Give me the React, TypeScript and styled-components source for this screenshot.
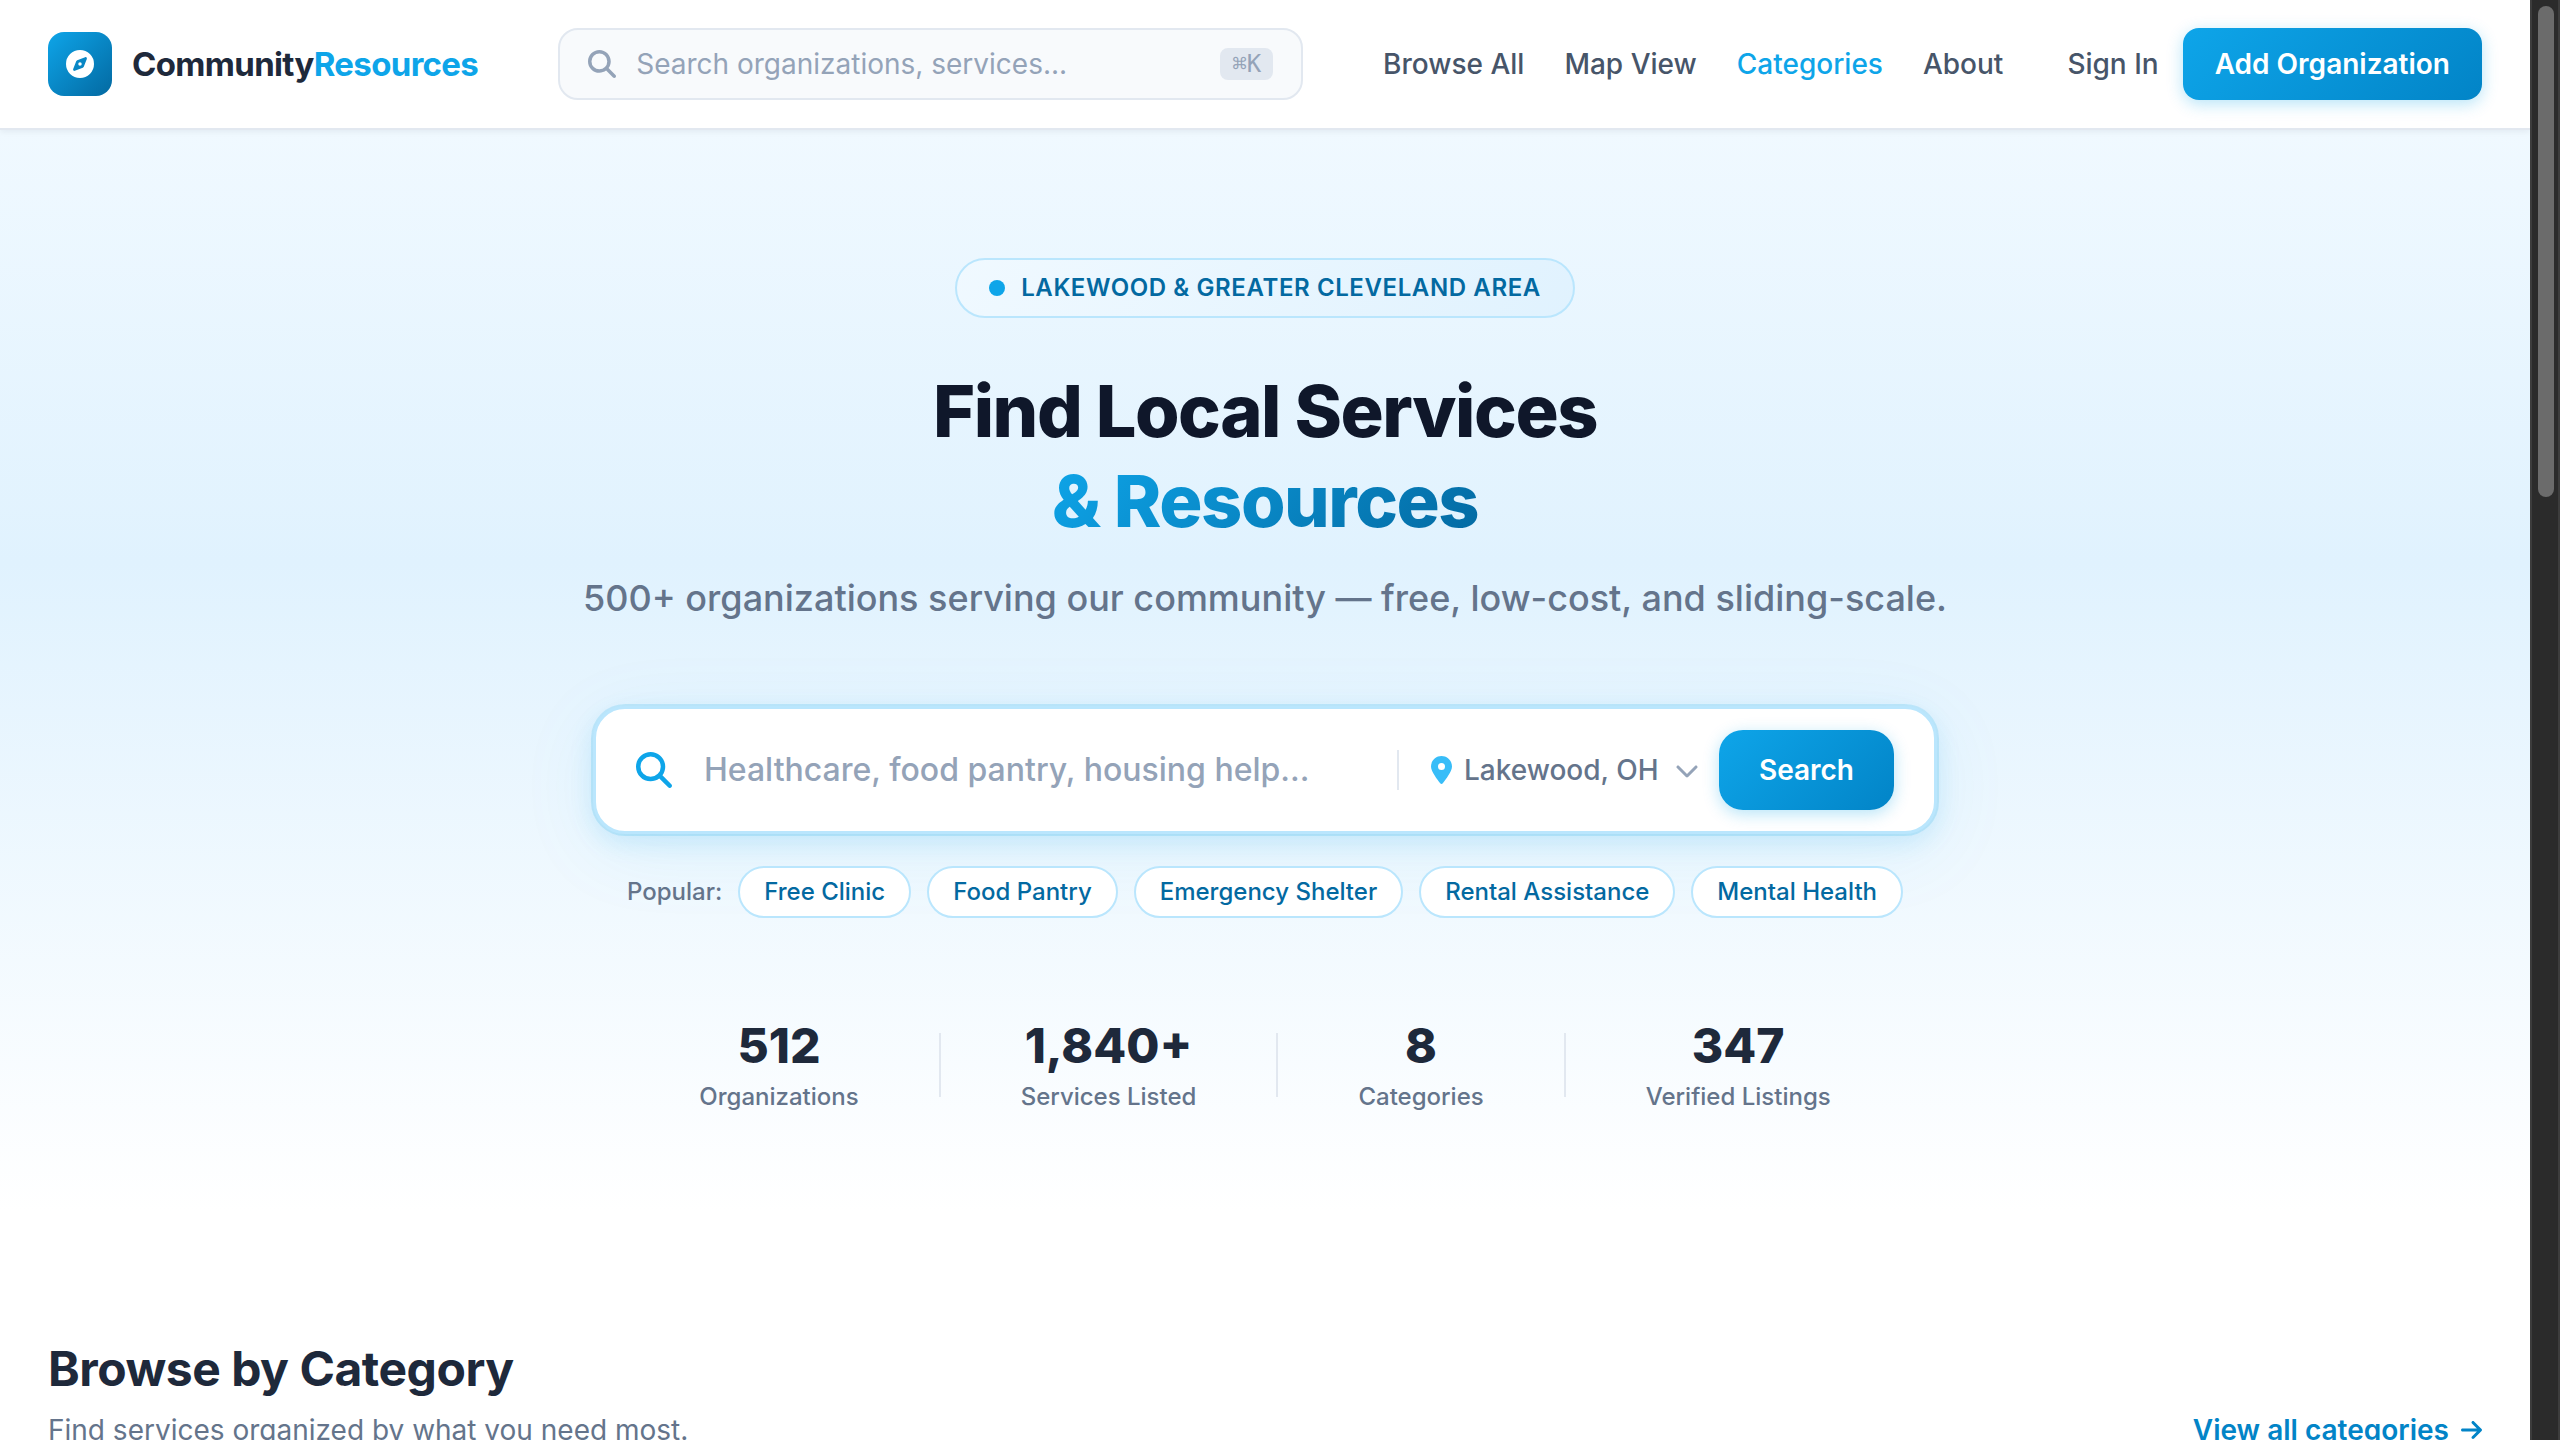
import React from "react";
import styled, { createGlobalStyle } from "styled-components";
import {
  FaArrowRight,
  FaChevronDown,
  FaCompass,
  FaLocationDot,
  FaMagnifyingGlass,
} from "react-icons/fa6";

const GlobalStyle = createGlobalStyle`
  *, *::before, *::after { box-sizing: border-box; }
  body { margin: 0; background: #fff; }
  body, button, input, select {
    font-family: Inter, "Liberation Sans", sans-serif;
    -webkit-font-smoothing: antialiased;
  }
  h1, h2, p, ul, dl, dd { margin: 0; padding: 0; }
  a { text-decoration: none; }
  svg { flex-shrink: 0; }
`;

const Shell = styled.div`
  display: grid;
  grid-template-columns: minmax(0, 1fr) 30px;
  height: 100vh;
  overflow: hidden;
`;

const Page = styled.div`
  min-width: 0;
  overflow: hidden;
`;

const ScrollTrack = styled.div`
  background: #2b2b2b;
  border: solid #3d3d3d;
  border-width: 0 2px;
  padding: 6px 4px 6px 6px;
`;

const ScrollThumb = styled.div`
  height: 34.4%;
  border-radius: 8px;
  background: #6b6b6b;
`;

const Header = styled.header`
  position: relative;
  display: flex;
  align-items: center;
  height: 130px;
  padding: 0 48px;
  background: #fff;
  border-bottom: 2px solid #e2e8f0;
  box-shadow: 0 2px 6px rgba(15, 23, 42, 0.06);
`;

const Brand = styled.a`
  display: flex;
  align-items: center;
  gap: 20px;
  color: #1e293b;
  font-size: 33px;
  font-weight: 700;
  letter-spacing: -0.02em;
  line-height: 48px;
`;

const BrandMark = styled.span`
  display: grid;
  place-items: center;
  width: 64px;
  height: 64px;
  border-radius: 16px;
  color: #fff;
  background: linear-gradient(135deg, #0ea5e9, #0369a1);
`;

const BrandAccent = styled.span`
  color: #0ea5e9;
`;

const QuickSearch = styled.label`
  display: flex;
  flex: 1;
  align-items: center;
  gap: 20px;
  min-width: 0;
  height: 72px;
  margin: 0 80px;
  padding: 0 28px;
  border: 2px solid #e2e8f0;
  border-radius: 20px;
  background: #f8fafc;
  color: #94a3b8;
`;

const TextInput = styled.input<{ $large?: boolean }>`
  flex: 1;
  min-width: 0;
  padding: 0;
  border: 0;
  outline: 0;
  background: transparent;
  color: #1e293b;
  font-size: ${(p) => (p.$large ? 32 : 28)}px;
  font-weight: ${(p) => (p.$large ? 500 : 400)};
  line-height: 48px;
  &::placeholder {
    color: #94a3b8;
    opacity: 1;
  }
`;

const Shortcut = styled.kbd`
  padding: 0 12px;
  border-radius: 8px;
  background: #e2e8f0;
  color: #94a3b8;
  font-family: "DejaVu Sans Mono", monospace;
  font-size: 24px;
  line-height: 32px;
`;

const Nav = styled.nav`
  display: flex;
  gap: 40px;
  margin-right: 64px;
`;

const NavLink = styled.a<{ $active?: boolean }>`
  color: ${(p) => (p.$active ? "#0ea5e9" : "#475569")};
  font-size: 28px;
  font-weight: 500;
  line-height: 42px;
  white-space: nowrap;
`;

const PrimaryButton = styled.button<{ $large?: boolean }>`
  height: ${(p) => (p.$large ? 80 : 72)}px;
  padding: 0 ${(p) => (p.$large ? 40 : 32)}px;
  border: 0;
  border-radius: ${(p) => (p.$large ? 24 : 16)}px;
  background: linear-gradient(135deg, #0ea5e9, #0284c7);
  box-shadow: 0 4px 16px rgba(14, 165, 233, 0.3);
  color: #fff;
  font-size: 28px;
  font-weight: 600;
  white-space: nowrap;
`;

const Actions = styled.div`
  display: flex;
  align-items: center;
  gap: 24px;
`;

const Hero = styled.section`
  display: flex;
  flex-direction: column;
  align-items: center;
  padding: 128px 48px 96px;
  background: linear-gradient(180deg, #f0f9ff 0%, #e0f2fe 40%, #fff 100%);
`;

const Badge = styled.p`
  display: flex;
  align-items: center;
  gap: 16px;
  margin-bottom: 48px;
  padding: 10px 32px;
  border: 2px solid #bae6fd;
  border-radius: 30px;
  background: linear-gradient(135deg, #f0f9ff, #e0f2fe);
  color: #0369a1;
  font-size: 24px;
  font-weight: 600;
  letter-spacing: 0.025em;
  line-height: 36px;
  text-transform: uppercase;
`;

const Dot = styled.span`
  width: 16px;
  height: 16px;
  border-radius: 50%;
  background: #0ea5e9;
`;

const Title = styled.h1`
  color: #0f172a;
  font-size: 72px;
  font-weight: 800;
  letter-spacing: -0.02em;
  line-height: 90px;
  text-align: center;
`;

const TitleAccent = styled.span`
  display: block;
  width: fit-content;
  margin: 0 auto;
  background: linear-gradient(135deg, #0ea5e9, #0369a1);
  background-clip: text;
  color: transparent;
`;

const Lead = styled.p`
  margin: 24px 0 80px;
  color: #64748b;
  font-size: 36px;
  font-weight: 500;
  line-height: 56px;
  text-align: center;
`;

const SearchBar = styled.form`
  display: flex;
  align-items: center;
  width: 100%;
  max-width: 1344px;
  height: 128px;
  padding: 0 40px;
  border: 3px solid #bae6fd;
  border-radius: 32px;
  background: #fff;
  box-shadow:
    0 0 0 2px rgba(14, 165, 233, 0.16),
    0 8px 24px rgba(14, 165, 233, 0.14),
    0 16px 80px rgba(14, 165, 233, 0.08);
`;

const SearchField = styled.label`
  display: flex;
  flex: 1;
  align-items: center;
  gap: 32px;
  min-width: 0;
  color: #0ea5e9;
`;

const LocationField = styled.label`
  display: grid;
  grid-template-columns: auto auto 24px;
  align-items: center;
  margin-right: 20px;
  color: #94a3b8;
`;

const Pin = styled(FaLocationDot)`
  width: 21px;
  height: 28px;
  margin-right: 12px;
  color: #38bdf8;
`;

const LocationSelect = styled.select`
  grid-column: 2 / 4;
  grid-row: 1;
  padding: 0 40px 0 0;
  border: 0;
  outline: 0;
  appearance: none;
  background: transparent;
  color: #64748b;
  font-size: 28px;
  font-weight: 500;
  line-height: 42px;
`;

const Caret = styled(FaChevronDown)`
  grid-column: 3;
  grid-row: 1;
  pointer-events: none;
`;

const Divider = styled.span<{ $tall?: boolean }>`
  width: 2px;
  height: ${(p) => (p.$tall ? 64 : 40)}px;
  background: #e2e8f0;
`;

const FieldDivider = styled(Divider)`
  margin: 0 32px;
`;

const Popular = styled.div`
  display: flex;
  align-items: center;
  gap: 16px;
  margin: 32px 0 96px;
  color: #64748b;
  font-size: 24px;
  font-weight: 500;
  line-height: 36px;
`;

const Chip = styled.button`
  padding: 6px 24px;
  border: 2px solid #bae6fd;
  border-radius: 26px;
  background: #fff;
  color: #0369a1;
  font-size: 24px;
  font-weight: 500;
  line-height: 36px;
`;

const Stats = styled.dl`
  display: flex;
  align-items: center;
  gap: 80px;
`;

const Stat = styled.div`
  display: flex;
  flex-direction: column-reverse;
  align-items: center;
`;

const StatValue = styled.dd`
  color: #1e293b;
  font-size: 48px;
  font-weight: 800;
  line-height: 64px;
`;

const StatLabel = styled.dt`
  color: #64748b;
  font-size: 24px;
  font-weight: 500;
  line-height: 38px;
`;

const Categories = styled.section`
  display: flex;
  align-items: flex-end;
  justify-content: space-between;
  padding: 121px 48px;
`;

const SectionTitle = styled.h2`
  color: #1e293b;
  font-size: 48px;
  font-weight: 700;
  letter-spacing: -0.01em;
  line-height: 72px;
`;

const SectionText = styled.p`
  margin-top: 4px;
  color: #64748b;
  font-size: 28px;
  line-height: 42px;
`;

const MoreLink = styled.a`
  display: flex;
  align-items: center;
  gap: 12px;
  color: #0284c7;
  font-size: 28px;
  font-weight: 600;
  line-height: 42px;
`;

const MoreArrow = styled(FaArrowRight)`
  width: 21px;
  height: 24px;
`;

const navItems = ["Browse All", "Map View", "Categories", "About"];
const popular = ["Free Clinic", "Food Pantry", "Emergency Shelter", "Rental Assistance", "Mental Health"];
const stats = [
  { value: "512", label: "Organizations" },
  { value: "1,840+", label: "Services Listed" },
  { value: "8", label: "Categories" },
  { value: "347", label: "Verified Listings" },
];

export default function App() {
  return (
    <Shell>
      <GlobalStyle />
      <Page>
        <Header>
          <Brand href="#">
            <BrandMark>
              <FaCompass size={28} />
            </BrandMark>
            <span>
              Community<BrandAccent>Resources</BrandAccent>
            </span>
          </Brand>
          <QuickSearch>
            <FaMagnifyingGlass size={28} />
            <TextInput type="search" aria-label="Search organizations" placeholder="Search organizations, services..." />
            <Shortcut>⌘K</Shortcut>
          </QuickSearch>
          <Nav>
            {navItems.map((item) => (
              <NavLink key={item} href="#" $active={item === "Categories"}>
                {item}
              </NavLink>
            ))}
          </Nav>
          <Actions>
            <NavLink href="#">Sign In</NavLink>
            <PrimaryButton type="button">Add Organization</PrimaryButton>
          </Actions>
        </Header>

        <main>
          <Hero>
            <Badge>
              <Dot />
              Lakewood &amp; Greater Cleveland Area
            </Badge>
            <Title>
              Find Local Services
              <TitleAccent>&amp; Resources</TitleAccent>
            </Title>
            <Lead>500+ organizations serving our community — free, low-cost, and sliding-scale.</Lead>
            <SearchBar onSubmit={(e) => e.preventDefault()}>
              <SearchField>
                <FaMagnifyingGlass size={36} />
                <TextInput $large type="search" aria-label="Search services" placeholder="Healthcare, food pantry, housing help..." />
              </SearchField>
              <FieldDivider />
              <LocationField>
                <Pin />
                <LocationSelect aria-label="Location" defaultValue="Lakewood, OH">
                  <option>Lakewood, OH</option>
                </LocationSelect>
                <Caret size={24} />
              </LocationField>
              <PrimaryButton $large type="submit">
                Search
              </PrimaryButton>
            </SearchBar>
            <Popular>
              <span>Popular:</span>
              {popular.map((name) => (
                <Chip key={name} type="button">
                  {name}
                </Chip>
              ))}
            </Popular>
            <Stats>
              {stats.map((stat, i) => (
                <React.Fragment key={stat.label}>
                  {i > 0 && <Divider $tall />}
                  <Stat>
                    <StatLabel>{stat.label}</StatLabel>
                    <StatValue>{stat.value}</StatValue>
                  </Stat>
                </React.Fragment>
              ))}
            </Stats>
          </Hero>

          <Categories>
            <div>
              <SectionTitle>Browse by Category</SectionTitle>
              <SectionText>Find services organized by what you need most.</SectionText>
            </div>
            <MoreLink href="#">
              View all categories
              <MoreArrow />
            </MoreLink>
          </Categories>
        </main>
      </Page>
      <ScrollTrack aria-hidden="true">
        <ScrollThumb />
      </ScrollTrack>
    </Shell>
  );
}
